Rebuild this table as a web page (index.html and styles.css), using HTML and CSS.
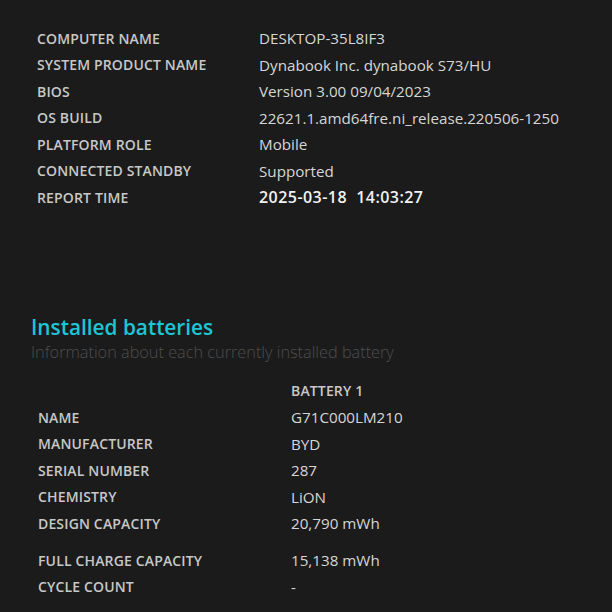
FILE: index.html
```html
<!DOCTYPE html>
<html>
<head>
<meta charset="utf-8">
<link rel="stylesheet" href="styles.css">
</head>
<body>
<div class="page">
  <div class="table info">
    <div class="row"><div class="lbl">COMPUTER NAME</div><div class="val">DESKTOP-35L8IF3</div></div>
    <div class="row"><div class="lbl">SYSTEM PRODUCT NAME</div><div class="val">Dynabook Inc. dynabook S73/HU</div></div>
    <div class="row"><div class="lbl">BIOS</div><div class="val">Version 3.00 09/04/2023</div></div>
    <div class="row"><div class="lbl">OS BUILD</div><div class="val">22621.1.amd64fre.ni_release.220506-1250</div></div>
    <div class="row"><div class="lbl">PLATFORM ROLE</div><div class="val">Mobile</div></div>
    <div class="row"><div class="lbl">CONNECTED STANDBY</div><div class="val">Supported</div></div>
    <div class="row"><div class="lbl">REPORT TIME</div><div class="val strong">2025-03-18&nbsp;&nbsp;14:03:27</div></div>
  </div>

  <h2 class="title">Installed batteries</h2>
  <div class="subtitle">Information about each currently installed battery</div>

  <div class="table batt">
    <div class="row"><div class="lbl"></div><div class="colhead">BATTERY 1</div></div>
    <div class="row"><div class="lbl">NAME</div><div class="val">G71C000LM210</div></div>
    <div class="row"><div class="lbl">MANUFACTURER</div><div class="val">BYD</div></div>
    <div class="row"><div class="lbl">SERIAL NUMBER</div><div class="val">287</div></div>
    <div class="row"><div class="lbl">CHEMISTRY</div><div class="val">LiON</div></div>
    <div class="row"><div class="lbl">DESIGN CAPACITY</div><div class="val">20,790 mWh</div></div>
    <div class="row sep"><div class="lbl">FULL CHARGE CAPACITY</div><div class="val">15,138 mWh</div></div>
    <div class="row"><div class="lbl">CYCLE COUNT</div><div class="val">-</div></div>
  </div>
</div>
</body>
</html>
```

FILE: styles.css
```css
html, body {
  margin: 0;
  padding: 0;
  background: #1b1b1b;
}
body {
  font-family: "Open Sans", "Noto Sans", sans-serif;
  color: #d2d2d2;
  height: 612px;
  overflow: hidden;
}
.page {
  padding-top: 25px;
}
.row {
  display: flex;
  align-items: center;
  height: 26.5px;
}
.row.sep {
  margin-top: 10.5px;
}
.info {
  padding-left: 37px;
}
.info .lbl {
  width: 222px;
}
.batt {
  padding-left: 38px;
  margin-top: 14px;
}
.batt .lbl {
  width: 253px;
}
.lbl {
  flex: none;
  font-size: 14px;
  font-weight: 600;
  color: #c8c8c8;
  letter-spacing: 0.15px;
}
.val {
  font-size: 15.2px;
  font-weight: 400;
  color: #d6d6d6;
}
.val.strong {
  font-size: 16px;
  font-weight: 600;
  color: #f2f2f2;
  letter-spacing: 0.45px;
}
.colhead {
  font-size: 14px;
  font-weight: 600;
  color: #c8c8c8;
  letter-spacing: 0.15px;
}
.title {
  margin: 103px 0 0 31px;
  font-size: 20.8px;
  font-weight: 600;
  color: #1cc6d4;
  line-height: 26px;
}
.subtitle {
  margin: 0 0 0 31px;
  font-size: 16.3px;
  font-weight: 300;
  color: #4e4e4e;
  line-height: 24px;
}
```
